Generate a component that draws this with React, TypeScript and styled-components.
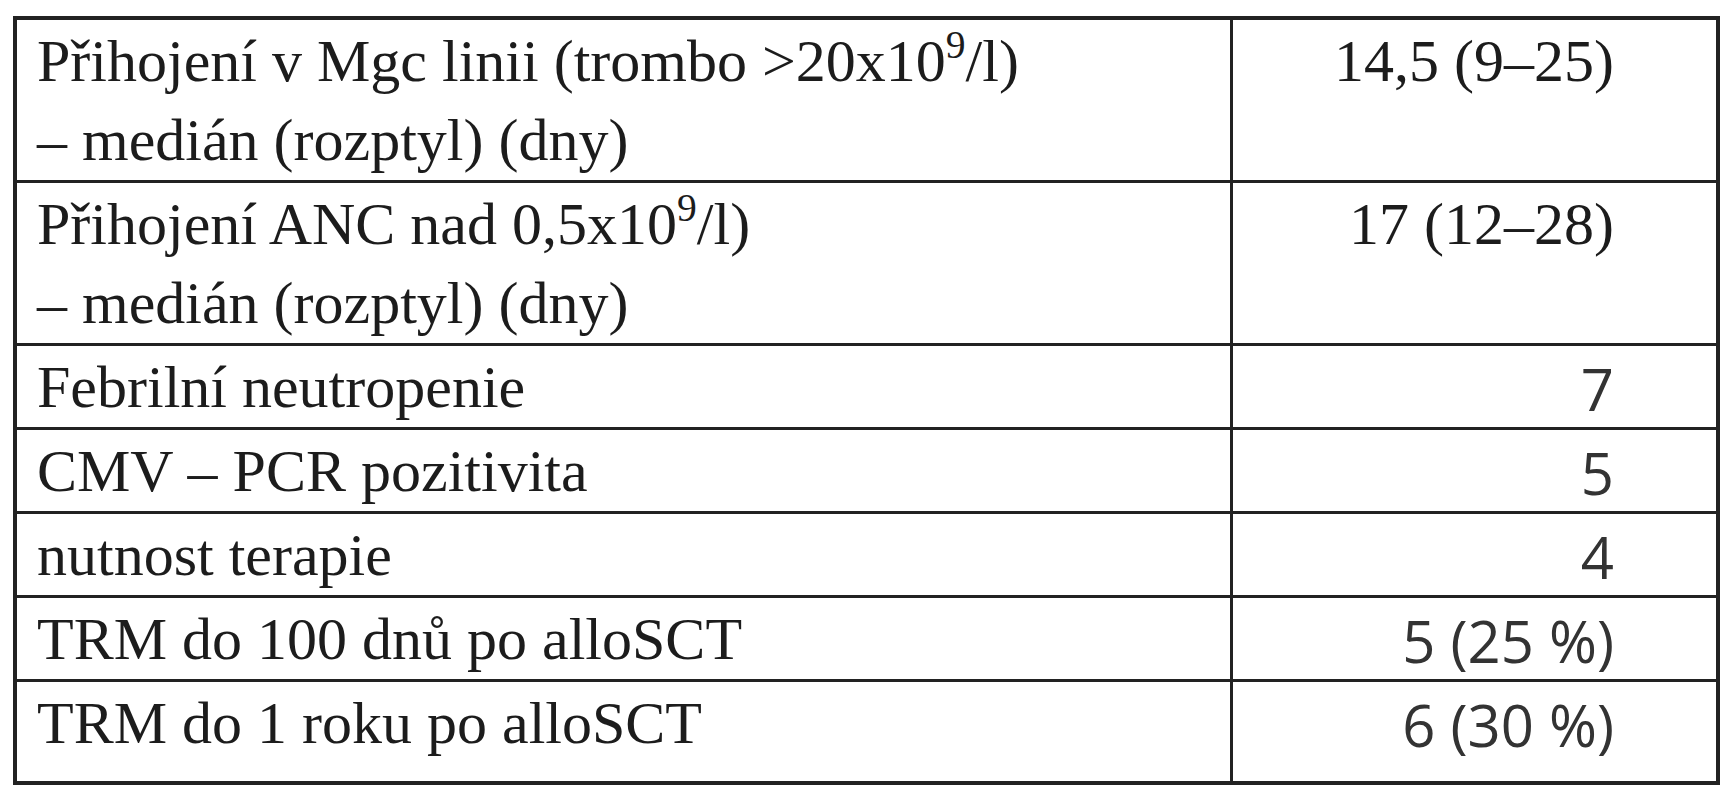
import React from "react";
import styled, { createGlobalStyle } from "styled-components";

const GlobalStyle = createGlobalStyle`
    html, body {
        margin: 0;
        padding: 0;
        background: #ffffff;
    }
`;

const Page = styled.div`
    padding: 16px 0 0 13px;
`;

const Table = styled.table`
    width: 1707px;
    table-layout: fixed;
    border-collapse: separate;
    border-spacing: 0;
    border: 4px solid #222222;
    color: #1c1c1c;
    font-family: "Liberation Serif", "Times New Roman", serif;
    font-size: 60px;
`;

const LabelCell = styled.td<{ $last?: boolean }>`
    width: 1193px;
    padding: 2px 0 ${({ $last }) => ($last ? "18px" : "0")} 20px;
    line-height: 79px;
    vertical-align: top;
    border-right: 3px solid #222222;
    border-bottom: ${({ $last }) => ($last ? "none" : "3px solid #222222")};
    white-space: nowrap;
`;

const ValueCell = styled.td<{ $last?: boolean; $sans?: boolean }>`
    padding: ${({ $sans }) => ($sans ? "4px" : "2px")} 102px
        ${({ $last }) => ($last ? "18px" : "0")} 0;
    line-height: ${({ $sans }) => ($sans ? "77px" : "79px")};
    vertical-align: top;
    text-align: right;
    border-bottom: ${({ $last }) => ($last ? "none" : "3px solid #222222")};
    white-space: nowrap;
    font-family: ${({ $sans }) =>
        $sans ? `"Open Sans", "Liberation Sans", sans-serif` : "inherit"};
    font-size: ${({ $sans }) => ($sans ? "58px" : "inherit")};
    color: ${({ $sans }) => ($sans ? "#333333" : "inherit")};
`;

const Sup = styled.sup`
    font-size: 0.66em;
    line-height: 0;
    vertical-align: 0.58em;
`;

type Row = {
    label: React.ReactNode;
    value: string;
    sans?: boolean;
};

const rows: Row[] = [
    {
        label: (
            <>
                Přihojení v Mgc linii (trombo &gt;20x10<Sup>9</Sup>/l)
                <br />– medián (rozptyl) (dny)
            </>
        ),
        value: "14,5 (9–25)",
    },
    {
        label: (
            <>
                Přihojení ANC nad 0,5x10<Sup>9</Sup>/l)
                <br />– medián (rozptyl) (dny)
            </>
        ),
        value: "17 (12–28)",
    },
    { label: "Febrilní neutropenie", value: "7", sans: true },
    { label: "CMV – PCR pozitivita", value: "5", sans: true },
    { label: "nutnost terapie", value: "4", sans: true },
    { label: "TRM do 100 dnů po alloSCT", value: "5 (25 %)", sans: true },
    { label: "TRM do 1 roku po alloSCT", value: "6 (30 %)", sans: true },
];

const App = () => {
    return (
        <>
            <GlobalStyle />
            <Page>
                <Table>
                    <tbody>
                        {rows.map((row, i) => {
                            const last = i === rows.length - 1;
                            return (
                                <tr key={i}>
                                    <LabelCell $last={last}>{row.label}</LabelCell>
                                    <ValueCell $last={last} $sans={row.sans}>
                                        {row.value}
                                    </ValueCell>
                                </tr>
                            );
                        })}
                    </tbody>
                </Table>
            </Page>
        </>
    );
};

export default App;
